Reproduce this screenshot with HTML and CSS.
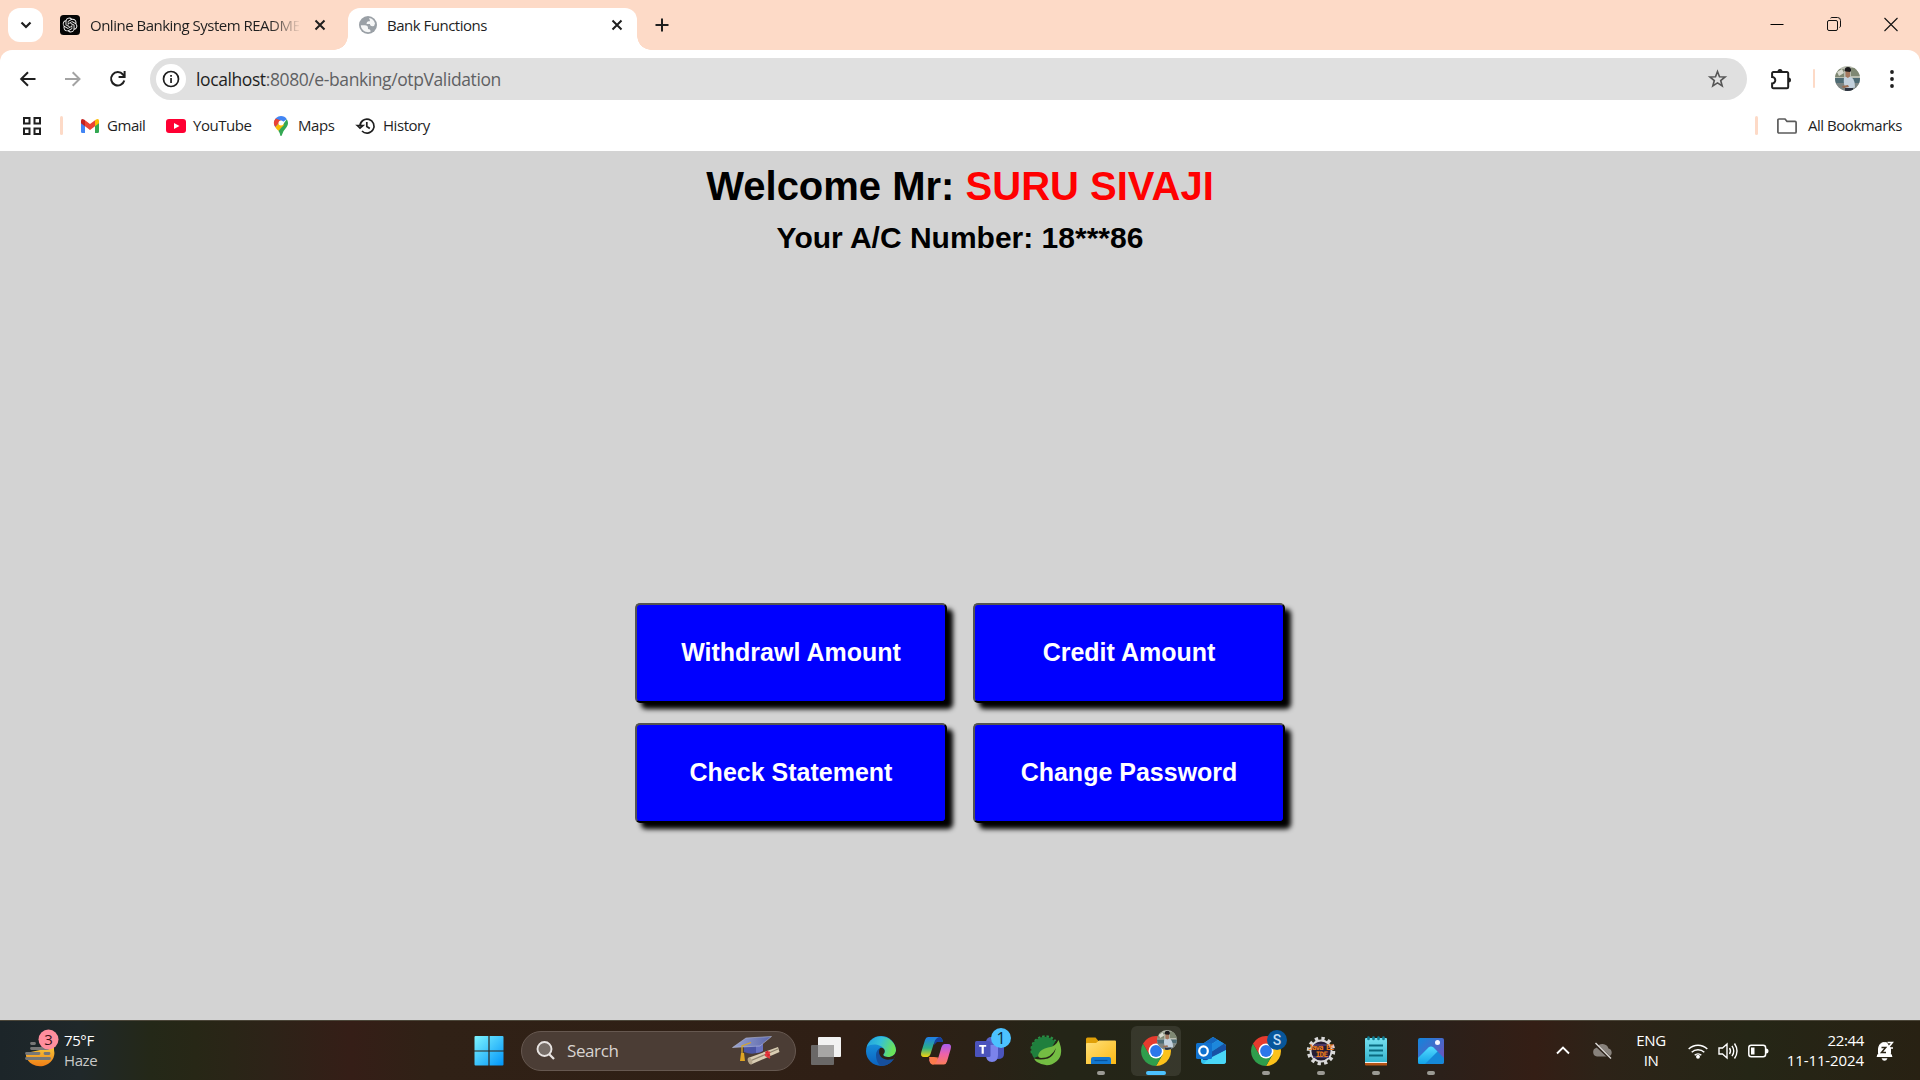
FILE: index.html
```html
<!DOCTYPE html>
<html lang="en">
<head>
<meta charset="utf-8">
<title>Bank Functions</title>
<link rel="stylesheet" href="styles.css">
</head>
<body>
<svg class="defs" width="0" height="0" aria-hidden="true">
  <defs>
    <linearGradient id="win" x1="0" y1="0" x2="1" y2="1"><stop offset="0" stop-color="#7df4ff"/><stop offset="1" stop-color="#0094f8"/></linearGradient>
    <linearGradient id="edgeTop" x1="0" y1="0" x2="1" y2=".3"><stop offset="0" stop-color="#1f9fe0"/><stop offset=".5" stop-color="#35c1d8"/><stop offset="1" stop-color="#6ae25a"/></linearGradient>
    <linearGradient id="edgeLow" x1="0" y1="0" x2="0" y2="1"><stop offset="0" stop-color="#1b9de2"/><stop offset="1" stop-color="#0a62c0"/></linearGradient>
    <linearGradient id="copA" x1="0" y1="0" x2="0" y2="1"><stop offset="0" stop-color="#1f7de8"/><stop offset=".55" stop-color="#2cb087"/><stop offset="1" stop-color="#f5d20c"/></linearGradient>
    <linearGradient id="copB" x1="0" y1="0" x2="0" y2="1"><stop offset="0" stop-color="#a65df0"/><stop offset=".5" stop-color="#ee62a8"/><stop offset="1" stop-color="#fb7d5a"/></linearGradient>
    <linearGradient id="folder" x1="0" y1="0" x2="1" y2="1"><stop offset="0" stop-color="#ffe07a"/><stop offset="1" stop-color="#fbb914"/></linearGradient>
    <linearGradient id="photo" x1="0" y1="0" x2="1" y2="1"><stop offset="0" stop-color="#1186dc"/><stop offset="1" stop-color="#7a4db8"/></linearGradient>
    <linearGradient id="hill" x1="0" y1="0" x2="0" y2="1"><stop offset="0" stop-color="#55dcff"/><stop offset="1" stop-color="#12a2e8"/></linearGradient>
    <linearGradient id="note" x1="0" y1="0" x2="0" y2="1"><stop offset="0" stop-color="#76e0f0"/><stop offset="1" stop-color="#35b5cf"/></linearGradient>
    <linearGradient id="sun" x1="0" y1="0" x2="0" y2="1"><stop offset="0" stop-color="#f8c73a"/><stop offset="1" stop-color="#ee7d16"/></linearGradient>
    <linearGradient id="cap" x1="0" y1="0" x2="1" y2="0"><stop offset="0" stop-color="#9aa4cf"/><stop offset="1" stop-color="#5a66ac"/></linearGradient>
    <clipPath id="round"><circle cx="12.5" cy="12.5" r="12.5"/></clipPath>
    <symbol id="person" viewBox="0 0 25 25">
      <g clip-path="url(#round)">
        <rect width="25" height="25" fill="#b9bdb0"/>
        <path d="M0 3h9v8H0zM16 2h9v8h-9z" fill="#7f8873"/>
        <path d="M2 6l5-3 2 4-5 3z" fill="#d7d9cf"/>
        <path d="M0 12h10v6H0zM17 12h8v5h-8z" fill="#4e6b74"/>
        <path d="M0 17h25v8H0z" fill="#7d8583"/>
        <path d="M9 11.500q4-2 8 0 3 3 3 10l-9 1.500q-3-5-2-11.500z" fill="#c3d1dd"/>
        <path d="M10.500 4h4.500v6.500l-2.200 1.500-2.300-1.500z" fill="#a5785f"/>
        <path d="M9.500 5q0-4 3.500-4t3 4l-1 1-4-.5z" fill="#1c1b1d"/>
        <path d="M7 20l6-1 1 2-6 1z" fill="#9b6d52"/>
        <path d="M10 22h8v3h-8z" fill="#2d3340"/>
      </g>
    </symbol>
    <symbol id="chrome" viewBox="0 0 30 30">
      <path d="M15 7.500H27.990A15 15 0 0 1 15 30L21.500 18.700z" fill="#fcc21b"/>
      <path d="M8.500 18.700L2.010 7.500A15 15 0 0 0 15 30l6.500-11.300z" fill="#2f9e4c"/>
      <path d="M8.500 18.700L2.010 7.500A15 15 0 0 1 27.990 7.500H15z" fill="#e63b2e"/>
      <circle cx="15" cy="15" r="7.500" fill="#fff"/><circle cx="15" cy="15" r="5.900" fill="#2b77ea"/>
    </symbol>
  </defs>
</svg>

<header class="browser">
  <div class="tabstrip">
    <button class="tab-search" aria-label="Search tabs"><svg width="12" height="8" viewBox="0 0 12 8"><path d="M1.500 1.500L6 6l4.500-4.500" fill="none" stroke="#1f1f1f" stroke-width="2.200"/></svg></button>
    <div class="tab">
      <svg width="20" height="20" viewBox="0 0 20 20"><rect width="20" height="20" rx="3.500" fill="#050505"/><path transform="translate(2.600 2.600) scale(.617)" fill="#f2f2f2" d="M22.2819 9.8211a5.9847 5.9847 0 0 0-.5157-4.9108 6.0462 6.0462 0 0 0-6.5098-2.9A6.0651 6.0651 0 0 0 4.9807 4.1818a5.9847 5.9847 0 0 0-3.9977 2.9 6.0462 6.0462 0 0 0 .7427 7.0966 5.98 5.98 0 0 0 .511 4.9107 6.051 6.051 0 0 0 6.5146 2.9001A5.9847 5.9847 0 0 0 13.2599 24a6.0557 6.0557 0 0 0 5.7718-4.2058 5.9894 5.9894 0 0 0 3.9977-2.9001 6.0557 6.0557 0 0 0-.7475-7.0729zm-9.022 12.6081a4.4755 4.4755 0 0 1-2.8764-1.0408l.1419-.0804 4.7783-2.7582a.7948.7948 0 0 0 .3927-.6813v-6.7369l2.02 1.1686a.071.071 0 0 1 .038.052v5.5826a4.504 4.504 0 0 1-4.4945 4.4944zm-9.6607-4.1254a4.4708 4.4708 0 0 1-.5346-3.0137l.142.0852 4.783 2.7582a.7712.7712 0 0 0 .7806 0l5.8428-3.3685v2.3324a.0804.0804 0 0 1-.0332.0615L9.74 19.9502a4.4992 4.4992 0 0 1-6.1408-1.6464zM2.3408 7.8956a4.485 4.485 0 0 1 2.3655-1.9728V11.6a.7664.7664 0 0 0 .3879.6765l5.8144 3.3543-2.0201 1.1685a.0757.0757 0 0 1-.071 0l-4.8303-2.7865A4.504 4.504 0 0 1 2.3408 7.872zm16.5963 3.8558L13.1038 8.364 15.1192 7.2a.0757.0757 0 0 1 .071 0l4.8303 2.7913a4.4944 4.4944 0 0 1-.6765 8.1042v-5.6772a.79.79 0 0 0-.407-.667zm2.0107-3.0231l-.142-.0852-4.7735-2.7818a.7759.7759 0 0 0-.7854 0L9.409 9.2297V6.8974a.0662.0662 0 0 1 .0284-.0615l4.8303-2.7866a4.4992 4.4992 0 0 1 6.6802 4.66zM8.3065 12.863l-2.02-1.1638a.0804.0804 0 0 1-.038-.0567V6.0742a4.4992 4.4992 0 0 1 7.3757-3.4537l-.142.0805L8.704 5.459a.7948.7948 0 0 0-.3927.6813zm1.0976-2.3654l2.602-1.4998 2.6069 1.4998v2.9994l-2.5974 1.4997-2.6067-1.4997Z"/></svg>
      <span class="tab-title faded">Online Banking System README</span>
      <svg class="close" width="12" height="12" viewBox="0 0 12 12"><path d="M1.500 1.500l9 9m0-9l-9 9" stroke="#1f1f1f" stroke-width="2"/></svg>
    </div>
    <div class="curve left"></div>
    <div class="tab active">
      <svg width="18" height="18" viewBox="0 0 18 18"><circle cx="9" cy="9" r="9" fill="#9aa0a6"/><path d="M1.800 9.300H6q3 0 3 2.600v1q2.500 0 2.500 1.500v1.300A7.200 7.200 0 0 1 1.800 9.300zM10 1.900A7.200 7.200 0 0 1 16 7.500q-.5 3-2.500 2.800c-2-.2-2.500-1-2.500-2.300H7.500q0-2.600 2-2.800H11q-.2-2-1-3.300z" fill="#fff" opacity=".9"/></svg>
      <span class="tab-title">Bank Functions</span>
      <svg class="close" width="12" height="12" viewBox="0 0 12 12"><path d="M1.500 1.500l9 9m0-9l-9 9" stroke="#1f1f1f" stroke-width="2"/></svg>
    </div>
    <div class="curve right"></div>
    <svg class="new-tab" width="14" height="14" viewBox="0 0 14 14"><path d="M7 .5v13M.5 7h13" stroke="#1f1f1f" stroke-width="2"/></svg>
    <div class="window-controls">
      <svg width="14" height="14" viewBox="0 0 14 14"><path d="M.5 6.500h13" stroke="#000"/></svg>
      <svg width="14" height="14" viewBox="0 0 14 14" fill="none" stroke="#111"><rect x=".5" y="2.500" width="10" height="10" rx="1.500"/><path d="M3.500.2Q4-.5 5-.5h5.500q3 0 3 3V8q0 1-1 1.500"/></svg>
      <svg width="14" height="14" viewBox="0 0 14 14"><path d="M.5 0l13 13m0-13l-13 13" stroke="#111" stroke-width="1.100"/></svg>
    </div>
  </div>

  <div class="toolbar">
    <div class="nav">
      <svg width="18" height="18" viewBox="0 0 18 18" fill="none" stroke="#1f1f1f" stroke-width="2"><path d="M16.500 9H3M9 2.200L2.200 9 9 15.800"/></svg>
      <svg width="18" height="18" viewBox="0 0 18 18" fill="none" stroke="#a3a3a3" stroke-width="2"><path d="M1 9h14M8.700 2.200L15.500 9l-6.800 6.800"/></svg>
      <svg width="18" height="18" viewBox="0 0 18 18" fill="none" stroke="#1f1f1f" stroke-width="2"><path d="M15.300 10.500A6.700 6.700 0 1 1 14 4.500L15.500 6.300"/><path d="M15.600 1v6h-6"/></svg>
    </div>
    <div class="omnibox">
      <span class="site-info"><svg width="18" height="18" viewBox="0 0 18 18"><circle cx="9" cy="9" r="7.500" fill="none" stroke="#1f1f1f" stroke-width="1.700"/><path d="M8.200 8h1.700v5H8.200zM8.200 5h1.700v1.700H8.200z" fill="#1f1f1f"/></svg></span>
      <span class="url"><b>localhost</b>:8080/e-banking/otpValidation</span>
      <svg width="20" height="20" viewBox="0 0 20 20"><path d="M10.500 2.500l2 5.200 5.600.3-4.400 3.500 1.500 5.500-4.700-3.100L5.800 17l1.500-5.500L2.900 8l5.600-.3z" fill="none" stroke="#565656" stroke-width="1.600"/></svg>
    </div>
    <div class="actions">
      <svg width="22" height="22" viewBox="0 0 22 22"><path d="M3.300 4H17a1.200 1.200 0 0 1 1.200 1.200V19a1.200 1.200 0 0 1-1.200 1.200H3.300A1.200 1.200 0 0 1 2.100 19v-3.600a3.200 3.200 0 0 0 0-6.400V5.200A1.200 1.200 0 0 1 3.300 4z" fill="none" stroke="#1f1f1f" stroke-width="2"/><path d="M7.500 3.500a2.500 2.500 0 0 1 5 0zM18.500 9.500a2.500 2.500 0 0 1 0 5z" fill="#1f1f1f"/></svg>
      <i class="sep thin"></i>
      <svg class="avatar" width="25" height="25"><use href="#person"/></svg>
      <svg width="6" height="18" viewBox="0 0 6 18" fill="#1f1f1f"><circle cx="3" cy="2" r="1.900"/><circle cx="3" cy="9" r="1.900"/><circle cx="3" cy="16" r="1.900"/></svg>
    </div>
  </div>

  <div class="bookmarks">
    <svg class="apps" width="18" height="18" viewBox="0 0 18 18" fill="none" stroke="#1f1f1f" stroke-width="2"><path d="M1 1h5.500v5.500H1zM11.500 1H17v5.500h-5.500zM1 11.500h5.500V17H1zM11.500 11.500H17V17h-5.500z"/></svg>
    <i class="sep"></i>
    <a class="bm gmail"><svg width="18" height="14" viewBox="0 0 18 14"><path d="M0 2v10.800Q0 14 1.200 14H4V5z" fill="#4285f4"/><path d="M18 2v10.800q0 1.200-1.200 1.200H14V5z" fill="#34a853"/><path d="M14 1.300L15 .6q3-1.700 3 1.400v2.200l-4 3z" fill="#fbbc04"/><path d="M4 1.300L9 5l5-3.700v5.900L9 11 4 7.200z" fill="#ea4335"/><path d="M0 2Q0-1.100 3 .6l1 .7v5.900l-4-3z" fill="#c5221f"/></svg><span>Gmail</span></a>
    <a class="bm youtube"><svg width="20" height="14" viewBox="0 0 20 14"><rect width="20" height="14" rx="3" fill="#ff0033"/><path d="M8 4l5.500 3L8 10z" fill="#fff"/></svg><span>YouTube</span></a>
    <a class="bm maps"><svg width="14" height="20" viewBox="0 0 14 20"><path d="M7 0a7 7 0 0 0-7 7q0 2 1.300 4.200L12.800 3.200A7 7 0 0 0 7 0z" fill="#4285f4"/><path d="M1.700 2.500A7 7 0 0 0 1.300 11L7 4.500z" fill="#ea4335"/><path d="M12.800 3.200A7 7 0 0 1 12.500 11.300Q8.500 15.500 7.700 19.400q-.7 1.200-1.400 0Q6 17 4.300 14.800z" fill="#34a853"/><path d="M1.300 11.200L7 4.500l3 4.500-5.700 5.800Q2.300 13 1.300 11.200z" fill="#fbbc04"/><circle cx="7" cy="7" r="2.500" fill="#fff"/></svg><span>Maps</span></a>
    <a class="bm history"><svg width="18" height="18" viewBox="0 0 18 18" fill="none" stroke="#1f1f1f" stroke-width="1.700"><path d="M3 9a7 7 0 1 1 2 5"/><path d="M.3 8.500l2.700 2.500 2.900-2.500zM9.800 5v4.500l3 2"/></svg><span>History</span></a>
    <div class="all-bookmarks">
      <i class="sep"></i>
      <svg width="20" height="16" viewBox="0 0 20 16"><path d="M2 1h6l2 2.300h8q1.100 0 1.100 1.100v9.500q0 1.100-1.100 1.100H2Q.9 15 .9 13.900V2.100Q.9 1 2 1z" fill="none" stroke="#5b5b5b" stroke-width="1.700"/></svg>
      <span>All Bookmarks</span>
    </div>
  </div>
</header>

<main class="page">
  <h1>Welcome Mr: <span>SURU SIVAJI</span></h1>
  <h2>Your A/C Number: 18***86</h2>
  <div class="functions">
    <button>Withdrawl Amount</button>
    <button>Credit Amount</button>
    <button>Check Statement</button>
    <button>Change Password</button>
  </div>
</main>

<footer class="taskbar">
  <div class="weather">
    <svg width="36" height="40" viewBox="0 0 36 40"><path d="M2 24l14-3 1-3h13v3a14 13 0 0 1-28 6z" fill="url(#sun)"/><g stroke="#777" stroke-width="2.800" stroke-linecap="round"><path d="M7.500 14.500h3M7.500 19.500H24M2.500 24.500H15M21 24.500h4M2.500 29.500h23"/></g><circle cx="24.500" cy="10.500" r="10" fill="#ff8e9d"/><text x="24.500" y="16" text-anchor="middle" class="badge-text" fill="#3a1118">3</text></svg>
    <div class="weather-text"><span>75°F</span><span class="condition">Haze</span></div>
  </div>

  <div class="apps-row">
    <div class="slot"><svg width="30" height="30" viewBox="0 0 30 30"><path d="M.5 1q0-1 1-1H14.400v14.400H.5zM15.600 0h12.900q1 0 1 1v13.400H15.600zM.5 15.600h13.900V29.500H1.500q-1 0-1-1zM15.600 15.600h13.900v12.900q0 1-1 1H15.600z" fill="url(#win)"/></svg></div>
    <div class="search">
      <svg width="19" height="19" viewBox="0 0 19 19" fill="none" stroke="#e8e4e2" stroke-width="1.900"><circle cx="8.500" cy="8" r="7" fill="#766d67"/><path d="M13 13l5 5" stroke-width="2.300"/></svg>
      <span>Search</span>
      <svg class="cap" width="48" height="30" viewBox="0 0 48 30"><path d="M12 9v7q9 4 18-1V5z" fill="#4a55a4"/><path d="M24 8h7v7q-3 2-7 2z" fill="#6973c2"/><path d="M.5 11.500L14 2 39.500.5 28 10z" fill="url(#cap)" stroke="#c2c8e2" stroke-width=".5"/><path d="M19 6.500l-9 3.500v8" fill="none" stroke="#d7a52b" stroke-width="1.300"/><path d="M9 17h3l1 8H8z" fill="#e0a522"/><path d="M16 22L46 11l1.500 5L19 28.500z" fill="#d9cdb3"/><path d="M18 25L46 13" stroke="#8f8470" stroke-width="1.200"/><ellipse cx="18" cy="25" rx="2" ry="3.500" fill="#b7a88d" transform="rotate(-22 18 25)"/><path d="M33 16l3-1.500 2.500 5-3 1.500z" fill="#d7262e"/><path d="M33 19l5 3M38 16l-5 3" stroke="#e3373d" stroke-width="2"/></svg>
    </div>
    <div class="slot"><svg width="30" height="30" viewBox="0 0 30 30"><rect y="9" width="23" height="20" rx="1" fill="#6a6867"/><rect x="7" y="1" width="23" height="20" rx="1" fill="#f2f2f2"/><path d="M7 9h16v12H8q-1 0-1-1z" fill="#a7a6a5"/></svg></div>
    <div class="slot"><svg width="30" height="30" viewBox="0 0 30 30"><circle cx="15" cy="15" r="15" fill="url(#edgeLow)"/><path d="M.8 11A15 15 0 0 1 30 14c0 5-4 7-8 7-3 0-5-1-4.500-2.500C19 17 19 15 18 13.200 15 8 5 7 .8 11z" fill="url(#edgeTop)"/><path d="M10 19c0-3 1.500-6 4.500-7.200C13 15 14 22 21 23.500c3 .6 6-.8 6.800-.7C25 27.500 20 30.200 15 30c-3-2-5-6-5-11z" fill="#164f9d"/><path d="M17.200 18.500c1.600-1.600 2-3.500 1-5.300-1.500-1.500-3-1.700-4-1.200-2 3-1.500 8 3 10.500 4 2 8.300 1 10.300.6L30 20V15c-1 4-4 6-8 6-3 0-5-1-4.800-2.500z" fill="#2f2015"/></svg></div>
    <div class="slot"><svg width="30" height="28" viewBox="0 0 30 28"><path d="M7 0h11q3 0 4 5H15q-2 0-3 4L9.500 17q-1 3-3 3H3Q-1 20 .3 15L4 3q1-3 3-3z" fill="url(#copA)"/><path d="M18 0q3 0 4 5h-6l-3 3q0-6 5-8z" fill="#173f9c"/><path d="M23 27.500H12q-3 0-4-5h7q2 0 3-4L20.500 10q1-3 3-3H27q4 0 2.700 5L26 24.500q-1 3-3 3z" fill="url(#copB)"/><path d="M12 27.500q-3 0-4-7.500h5l4 .5q-1 6-5 7z" fill="#fb7a4b"/></svg></div>
    <div class="slot teams"><svg width="38" height="38" viewBox="0 0 38 38"><circle cx="17" cy="14" r="5" fill="#5760c8"/><path d="M19 16h11v10q0 5-6 5h-5z" fill="#4b55bd"/><path d="M12 17h12v10q0 7-6 7t-6-7z" fill="#7b83eb"/><rect x="1" y="13" width="15.500" height="16" rx="1.500" fill="#4b53bc"/><path d="M5.200 17h7v1.800H9.800v7H7.600v-7H5.200z" fill="#fff"/><circle cx="27" cy="10" r="10" fill="#4cc2ff"/><text x="27" y="15.500" text-anchor="middle" class="badge-text large" fill="#0b2b3d">1</text></svg></div>
    <div class="slot"><svg width="30" height="30" viewBox="0 0 30 30"><path d="M1.500 17A13 13 0 0 1 24 5.500" fill="none" stroke="#2b8f45" stroke-width="3.400" stroke-dasharray="2.400 1.700"/><path d="M3 22A13 13 0 0 1 24 6l-6 10z" fill="#1f7f3d"/><path d="M27.500 4q6 14-1.500 21-9 8-20 1-2-1.500-3-3.500 6 2 14 0 6-2.500 8-10.500-4.500 10-15 10-4.500-.5-2-5 2-4 9-5.500 8-1 10.500-7.500z" fill="#74bd43"/></svg></div>
    <div class="slot running"><svg width="30" height="28" viewBox="0 0 30 28"><path d="M0 2q0-1.500 1.500-1.500h8L12.500 4H28v5H0z" fill="#e0a007"/><path d="M0 7q0-1 1-1h9l3-2.500h16q1 0 1 1V27H0z" fill="url(#folder)"/><path d="M5 27v-5q0-2 2-2h16q2 0 2 2v5z" fill="#1277cf"/><path d="M8.500 23.500h13" stroke="#07529c" stroke-width="1.200"/></svg></div>
    <div class="slot current"><svg width="36" height="36" viewBox="0 0 36 36"><use href="#chrome" y="6" width="30" height="30"/><use href="#person" x="16" width="20" height="20"/></svg></div>
    <div class="slot"><svg width="30" height="27" viewBox="0 0 30 27"><path d="M5 8L17 0l13 8v16q0 3-3 3H8q-3 0-3-3z" fill="#32c4f2"/><path d="M5 8L17 0l5 3L5 14z" fill="#1466bf"/><path d="M22 3l6 3.500L9 19H5v-5z" fill="#1d87dc"/><path d="M28 6.500l2 2V13L13 23H7v-4h2z" fill="#1752a5"/><path d="M30 13v11q0 3-3 3H8q3-5 8-7z" fill="#4ad7f7"/><rect y="6" width="16" height="16" rx="1.500" fill="#1072cf"/><ellipse cx="7.500" cy="14" rx="4.300" ry="4.600" fill="none" stroke="#fff" stroke-width="2.200"/></svg></div>
    <div class="slot running"><svg width="36" height="36" viewBox="0 0 36 36"><use href="#chrome" y="6" width="30" height="30"/><circle cx="26" cy="10" r="10" fill="#07569b"/><text x="26" y="15" text-anchor="middle" class="badge-text s" fill="#c4dcf2">S</text></svg></div>
    <div class="slot running"><svg width="30" height="30" viewBox="0 0 30 30"><circle cx="15" cy="15" r="12.500" fill="none" stroke="#d9d9d9" stroke-width="3.500" stroke-dasharray="3.300 3.245"/><circle cx="15" cy="15" r="10.500" fill="#261d35" stroke="#d9d9d9" stroke-width="1.800"/><path d="M7 21h16M8 9h14" stroke="#54427b" stroke-width="1.500"/><text x="15" y="13.500" text-anchor="middle" class="java" textLength="25">Java EE</text><text x="15.500" y="20.500" text-anchor="middle" class="java">IDE</text></svg></div>
    <div class="slot running"><svg width="22" height="30" viewBox="0 0 22 30"><path d="M0 25h22v4.500H1q-1 0-1-1z" fill="#b65416"/><path d="M0 24h22v3H0z" fill="#eee"/><path d="M0 3q0-1 1-1h20q1 0 1 1v23H0z" fill="url(#note)"/><g stroke="#127f95" stroke-width="2.600" stroke-linecap="round"><path d="M3.500 1.500v1.500M8.500 1.500v1.500M13.500 1.500v1.500M18.500 1.500v1.500"/></g><path d="M4 9.500h14M4 14.500h14M4 19.500h14" stroke="#0a6a80" stroke-width="1.800"/></svg></div>
    <div class="slot running"><svg width="26" height="26" viewBox="0 0 26 26"><rect width="26" height="26" rx="2" fill="url(#photo)"/><path d="M0 20L10.500 9.500q2.500-2 5 0L26 20v4q0 2-2 2H2q-2 0-2-2z" fill="#1688d8"/><path d="M0 20L10.500 9.500q2.500-2 5 0l4 4L7 26H2q-2 0-2-2z" fill="url(#hill)"/><circle cx="19.500" cy="4.500" r="2.500" fill="#f4f4ff"/></svg></div>
  </div>

  <div class="tray">
    <svg class="chev" width="14" height="9" viewBox="0 0 14 9"><path d="M1 7.500l6-6 6 6" fill="none" stroke="#fff" stroke-width="1.900"/></svg>
    <svg class="cloud" width="22" height="18" viewBox="0 0 22 18"><path d="M5 14.500a4.500 4.500 0 0 1-.5-8.800 6.500 6.500 0 0 1 12 .8 4.200 4.200 0 0 1 .5 8z" fill="#88827c"/><path d="M2.500 1.500l16 15" stroke="#2b2018" stroke-width="3"/><path d="M3.500 1L19 16.500" stroke="#dedbd8" stroke-width="1.400"/></svg>
    <div class="lang"><span>ENG</span><span>IN</span></div>
    <div class="status">
      <svg width="20" height="16" viewBox="0 0 20 16" fill="none" stroke="#fff" stroke-width="1.500"><path d="M.7 6a13.200 13.200 0 0 1 18.600 0M3.700 9.200a9 9 0 0 1 12.600 0M6.700 12.200a4.800 4.800 0 0 1 6.600 0"/><circle cx="10" cy="13.700" r="1.200" fill="#fff"/></svg>
      <svg width="20" height="18" viewBox="0 0 20 18" fill="none" stroke="#fff" stroke-width="1.400"><path d="M1 6h3.500L9 2v14l-4.500-4H1zM11.500 6q2 3 0 6M14 3.800q3.500 5.200 0 10.400M16.500 1.500q5 7.500 0 15"/></svg>
      <svg width="21" height="14" viewBox="0 0 21 14"><rect x=".8" y="1.300" width="16.800" height="11.400" rx="2.500" fill="none" stroke="#fff" stroke-width="1.500"/><path d="M3 3.500h3.500v7H3zM18 4.500q2.500 0 2.500 2.500T18 9.500z" fill="#fff"/></svg>
    </div>
    <div class="clock"><span>22:44</span><span>11-11-2024</span></div>
    <svg class="bell" width="18" height="20" viewBox="0 0 18 20"><path d="M1 15.500h15l-1.500-3V8q-.5-6.500-6-6.500T2.500 8v4.500z" fill="#fff" stroke="#fff"/><path d="M5.500 17.200h6q-1 2.500-3 2.500t-3-2.500z" fill="#fff"/><path d="M5.500 6.500h4.200L5.500 11.500h4.500" fill="none" stroke="#2a2415" stroke-width="1.500"/><path d="M10.500.5H18v6h-4z" fill="#2a2415"/><path d="M11.500 1.500h4.800L12 7h5" fill="none" stroke="#fff" stroke-width="1.600"/></svg>
  </div>
</footer>
</body>
</html>
```
FILE: styles.css
```css
* { box-sizing: border-box; }

body {
  margin: 0;
  width: 1920px;
  height: 1080px;
  overflow: hidden;
  display: flex;
  flex-direction: column;
  font-family: "Open Sans", "Noto Sans", sans-serif;
  font-size: 15px;
  line-height: 20px;
  color: #1f1f1f;
}

svg { display: block; flex: none; overflow: visible; }
.defs { position: absolute; }

/* Browser chrome */
.browser { height: 151px; background: #fddac7; }

.tabstrip { display: flex; align-items: center; height: 50px; padding-left: 8px; }

.tab-search {
  display: grid;
  place-items: center;
  width: 35px;
  height: 34px;
  padding: 0;
  border: 0;
  border-radius: 12px;
  background: #fff;
}

.tab { display: flex; align-items: center; width: 291px; height: 42px; padding: 0 20px 0 17px; }
.tab-title { margin-left: 10px; flex: 1; white-space: nowrap; overflow: hidden; letter-spacing: -.5px; }
.tab-title.faded {
  flex: none;
  width: 209px;
  -webkit-mask-image: linear-gradient(90deg, #000 180px, transparent 211px);
  mask-image: linear-gradient(90deg, #000 180px, transparent 211px);
}
.tab:not(.active) .close { margin-left: 15px; }

.tab.active {
  align-self: flex-end;
  width: 289px;
  padding: 0 14px 8px 11px;
  border-radius: 12px 12px 0 0;
  background: #fff;
}

.curve { align-self: flex-end; width: 14px; height: 14px; }
.curve.left { background: radial-gradient(circle at 0 0, transparent 13.5px, #fff 14px); }
.curve.right { background: radial-gradient(circle at 100% 0, transparent 13.5px, #fff 14px); }
.new-tab { margin-left: 4px; }

.window-controls { display: flex; gap: 43px; margin-left: auto; padding-right: 22px; }

.toolbar {
  display: flex;
  align-items: center;
  height: 58px;
  padding: 0 25px 0 19px;
  border-radius: 12px 12px 0 0;
  background: #fff;
}
.nav { display: flex; gap: 27px; width: 131px; padding-bottom: 1px; }

.omnibox {
  display: flex;
  align-items: center;
  width: 1597px;
  height: 42px;
  padding: 0 20px 0 6px;
  border-radius: 21px;
  background: #e0e0e0;
}
.site-info { display: grid; place-items: center; width: 30px; height: 30px; border-radius: 50%; background: #fff; }
.url { flex: 1; margin-left: 10px; font-size: 17.500px; letter-spacing: -.4px; color: #5f6063; }
.url b { font-weight: 400; color: #1f1f1f; }

.actions { display: flex; align-items: center; margin-left: 23px; padding-bottom: 1px; }
.sep { width: 3px; height: 19px; border-radius: 2px; background: #fddac7; }
.sep.thin { width: 2px; margin-left: 21px; }
.avatar { margin: 0 29px 0 20px; }

.bookmarks {
  display: flex;
  align-items: center;
  height: 43px;
  padding: 0 18px 8px 23px;
  background: #fff;
  letter-spacing: -.45px;
  white-space: nowrap;
}
.bookmarks > .sep { margin: 0 18px 0 19px; }
.bm { display: flex; align-items: center; }
.bookmarks span { margin-bottom: 1px; }
.gmail { width: 85px; gap: 8px; }
.youtube { width: 108px; gap: 7px; }
.maps { width: 83px; gap: 10px; }
.history { gap: 8px; }
.all-bookmarks { display: flex; align-items: center; width: 147px; margin-left: auto; }
.all-bookmarks svg { margin: 0 11px 0 19px; }

/* Page content */
.page {
  display: flex;
  flex-direction: column;
  align-items: center;
  height: 869px;
  padding-top: 12px;
  background: #d3d3d3;
  font-family: Arial, "Liberation Sans", sans-serif;
  color: #000;
}
.page h1 { margin: 0; font-size: 40px; line-height: 46px; }
.page h1 span { color: #f00; }
.page h2 { margin: 12px 0 0; font-size: 30px; line-height: 34px; }

.functions {
  display: grid;
  grid-template-columns: 312px 312px;
  grid-auto-rows: 100px;
  gap: 20px 26px;
  margin-top: 348px;
}
.functions button {
  padding: 0 0 2px;
  border: 2px outset #000;
  border-radius: 5px;
  background: #00f;
  box-shadow: 6px 6px 5px #000;
  color: #fff;
  font: bold 25px Arial, "Liberation Sans", sans-serif;
}

/* Taskbar */
.taskbar {
  display: flex;
  align-items: center;
  height: 60px;
  border-top: 1px solid #4b4639;
  background: linear-gradient(90deg, #1c2529 0, #20282a 80px, #242818 150px, #272716 195px, #2d2318 270px, #351e17 350px, #302116 430px, #2f1f15 850px, #2b2116 970px, #242517 1060px, #242418 1320px, #2b201a 1440px, #341e15 1535px, #2d2318 1600px, #252616 1750px, #282113 1920px);
  color: #fff;
}

.weather { display: flex; align-items: center; width: 461px; padding-left: 24px; gap: 4px; }
.weather svg { margin-bottom: 4px; }
.weather-text { display: flex; flex-direction: column; padding-bottom: 2px; letter-spacing: -.4px; }
.condition { color: #c8c8c8; }

.badge-text { font: 15px "Open Sans", sans-serif; }
.badge-text.large { font-size: 16px; }
.badge-text.s { font: 500 14px Roboto, sans-serif; }
.java { font: bold 7.500px "DejaVu Sans Mono", monospace; letter-spacing: -.6px; fill: #ef7d1a; }

.apps-row { display: flex; align-items: center; height: 59px; }
.slot { position: relative; display: grid; place-items: center; width: 55px; height: 50px; }
.slot.teams svg { margin: 0 0 7px 5px; }
.slot.current svg, .slot:nth-child(11) svg { margin: 0 0 6px 6px; }
.slot.current { width: 50px; margin: 0 2.500px; border-radius: 6px; background: rgba(255,255,255,.09); }
.slot.running::after, .slot.current::after {
  content: "";
  position: absolute;
  bottom: 1px;
  left: calc(50% - 4px);
  width: 8px;
  height: 4px;
  border-radius: 2px;
  background: #9b9a94;
}
.slot.current::after { left: calc(50% - 10px); width: 20px; background: #4cc2ff; }

.search {
  display: flex;
  align-items: center;
  width: 275px;
  height: 40px;
  margin: 0 2px 0 5px;
  padding: 0 15px 0 14px;
  border: 1px solid #665850;
  border-radius: 20px;
  background: #4b3d35;
}
.search span { flex: 1; margin-left: 12px; font-size: 17px; letter-spacing: -.4px; color: #d9d4d1; }

.tray { display: flex; align-items: center; margin-left: auto; padding-right: 26px; letter-spacing: -.4px; }
.cloud { margin-left: 22px; }
.lang { display: flex; flex-direction: column; align-items: center; width: 32px; margin-left: 21px; padding-bottom: 1px; }
.status { display: flex; align-items: center; gap: 10px; margin-left: 21px; }
.clock { display: flex; flex-direction: column; align-items: flex-end; width: 95px; padding-bottom: 2px; letter-spacing: -.1px; }
.clock span:first-child { letter-spacing: -.35px; }
.bell { margin-left: 12px; }
```
